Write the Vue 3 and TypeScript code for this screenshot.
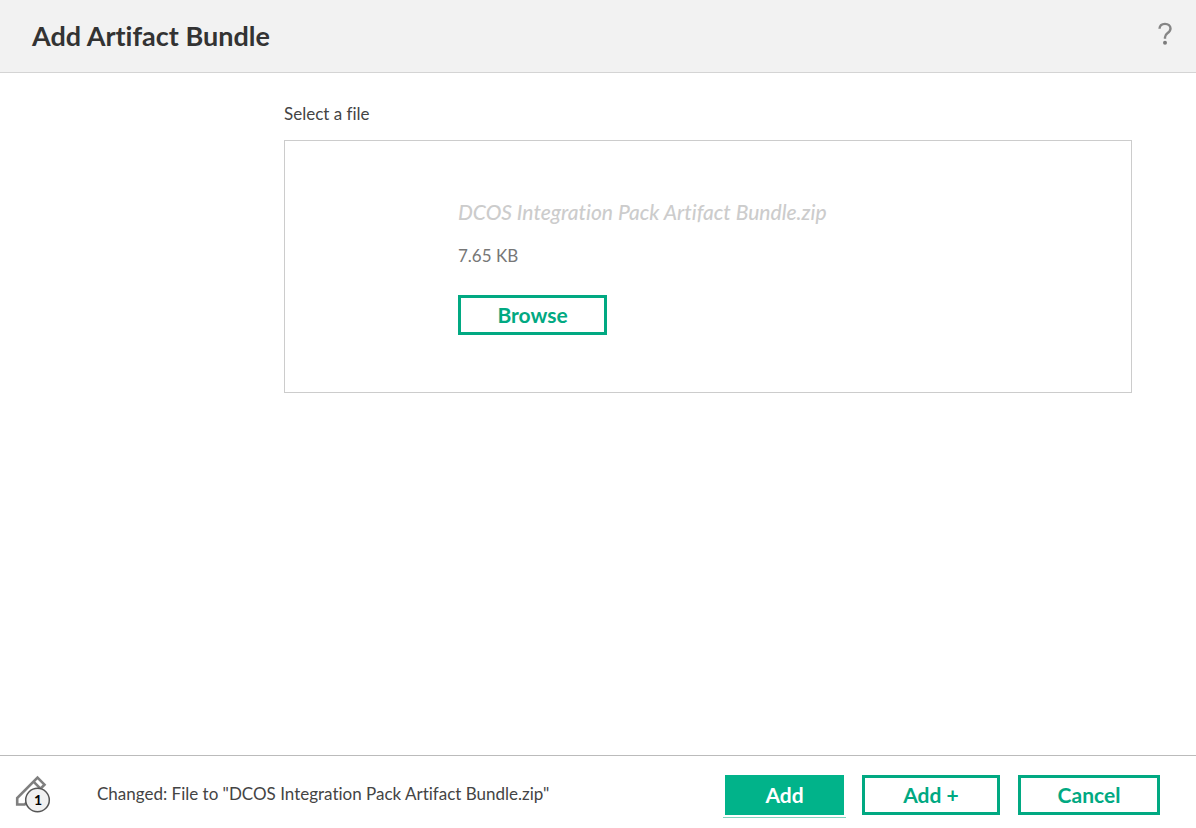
<script setup lang="ts">
import { ref } from 'vue'

const fileName = ref('DCOS Integration Pack Artifact Bundle.zip')
const fileSize = ref('7.65 KB')
const changeCount = ref(1)
</script>

<template>
  <div class="dialog">
    <header class="header">
      <h1 class="title">Add Artifact Bundle</h1>
      <button class="help" type="button" aria-label="Help">
        <svg width="14" height="24" viewBox="0 0 14 24" aria-hidden="true">
          <path
            d="M1.500 6.800C1.700 3.600 3.800 1.900 7 1.900c3.200 0 5.500 1.800 5.500 4.700 0 2.200-1.300 3.500-3.100 4.700C7.700 12.500 7 13.500 7 15.200v1.600"
            fill="none"
            stroke="#868686"
            stroke-width="2.400"
          />
          <circle cx="7" cy="20.800" r="2" fill="#7c7c7c" />
        </svg>
      </button>
    </header>

    <main class="body">
      <p id="file-label" class="label">Select a file</p>
      <section class="dropzone" aria-labelledby="file-label">
        <p class="file-name">{{ fileName }}</p>
        <p class="file-size">{{ fileSize }}</p>
        <button class="btn browse" type="button">Browse</button>
      </section>
    </main>

    <footer class="footer">
      <div class="changes">
        <svg class="pencil" width="36" height="38" viewBox="0 0 36 38" aria-hidden="true">
          <path
            d="M2.200 29.500V23L22.500 2.700L29.500 9.700L9.700 29.500ZM18.500 6.700L25.500 13.700"
            fill="none"
            stroke="#7f7f7f"
            stroke-width="2.600"
          />
          <circle cx="22.500" cy="25" r="11.800" fill="#f1f1f1" stroke="#555" stroke-width="1.500" />
        </svg>
        <span class="count">{{ changeCount }}</span>
      </div>
      <p class="message">Changed: File to "{{ fileName }}"</p>
      <div class="actions">
        <button class="btn primary" type="button">Add</button>
        <button class="btn add-more" type="button">Add +</button>
        <button class="btn cancel" type="button">Cancel</button>
      </div>
    </footer>
  </div>
</template>

<style>
body {
  margin: 0;
  background: #fff;
}
</style>

<style scoped>
.dialog {
  display: flex;
  flex-direction: column;
  min-height: 100vh;
  color: #444;
  font-family: Lato, "Liberation Sans", sans-serif;
  font-size: 17px;
  font-variant-ligatures: none;
  line-height: 24px;
}

h1,
p {
  margin: 0;
}

.header {
  display: flex;
  align-items: center;
  justify-content: space-between;
  box-sizing: border-box;
  min-height: 73px;
  padding: 0 24px 0 32px;
  border-bottom: 1px solid #d4d4d4;
  background: #f2f2f2;
}

.title {
  color: #333;
  font-size: 27px;
  font-weight: 700;
  line-height: 32px;
}

.help {
  display: flex;
  padding: 0 0 4px;
  border: 0;
  background: none;
}

.body {
  flex: 1;
  padding: 29px 64px 32px 284px;
}

.label {
  margin-bottom: 14px;
}

.dropzone {
  display: flex;
  flex-direction: column;
  align-items: flex-start;
  padding: 59px 173px 57px;
  border: 1px solid #ccc;
}

.file-name {
  margin-bottom: 20px;
  color: #ccc;
  font-size: 21px;
  font-style: italic;
  font-weight: 500;
}

.file-size {
  margin-bottom: 27px;
  color: #777;
}

.btn {
  box-sizing: border-box;
  height: 40px;
  padding: 0 34px;
  border: 3px solid #01a982;
  background: #fff;
  color: #01a982;
  font-family: inherit;
  font-size: 21px;
  font-weight: 700;
  line-height: 24px;
  cursor: pointer;
  white-space: nowrap;
}

.browse {
  min-width: 149px;
}

.footer {
  display: flex;
  align-items: center;
  box-sizing: border-box;
  min-height: 73px;
  padding: 3px 36px 0 15px;
  border-top: 1px solid #bbb;
}

.changes {
  position: relative;
  display: flex;
  flex: none;
  width: 36px;
  margin-right: 46px;
}

.count {
  position: absolute;
  top: 13px;
  left: 11px;
  width: 24px;
  color: #000;
  font-size: 14px;
  font-weight: 700;
  text-align: center;
}

.message {
  flex: 1;
}

.actions {
  display: flex;
  gap: 18px;
  padding-top: 3px;
}

.primary {
  position: relative;
  min-width: 119px;
  border-color: #01b38a;
  background: #01b38a;
  color: #fff;
}

.primary::after {
  position: absolute;
  right: -5px;
  bottom: -6px;
  left: -5px;
  height: 1px;
  background: #80d4bf;
  content: "";
}

.add-more {
  min-width: 138px;
}

.cancel {
  min-width: 142px;
}
</style>
